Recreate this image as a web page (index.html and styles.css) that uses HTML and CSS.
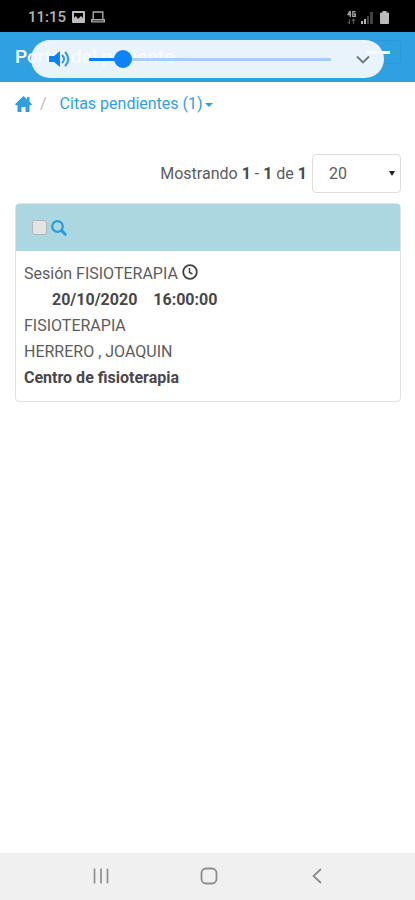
FILE: index.html
```html
<!DOCTYPE html>
<html lang="es">
<head>
<meta charset="utf-8">
<meta name="viewport" content="width=device-width, initial-scale=1">
<title>Portal del paciente</title>
<link rel="stylesheet" href="styles.css">
</head>
<body>
<div class="status">
  <span class="time">11:15</span>
  <svg class="s-pic" width="13" height="12" viewBox="0 0 13 12"><path fill="#bdbdbd" fill-rule="evenodd" d="M1 0h11a1 1 0 0 1 1 1v10a1 1 0 0 1-1 1H1a1 1 0 0 1-1-1V1a1 1 0 0 1 1-1zM2 2v5l2-2 2 3 3-3 2 2V2z"/></svg>
  <svg class="s-lap" width="14" height="12" viewBox="0 0 14 12"><path fill="none" stroke="#a8a8a8" stroke-width="1.400" d="M2.200 8.500V1h9.600v7.500M.700 8.700h12.600v2.200H.700z"/></svg>
  <div class="signals">
    <svg width="9" height="15" viewBox="0 0 9 15"><path fill="none" stroke="#aaa" stroke-width="1.300" d="M3 1 1 4.500h3.200M3.300 1v6M8.500 1.700H5.800v4.600h2.500V4H7"/><path fill="none" stroke="#555" stroke-width="1.200" d="M2.500 9v5M1 12l1.500 2M6.500 14V9M5 11l1.500-2L8 11"/></svg>
    <svg width="12" height="13" viewBox="0 0 12 13"><path fill="#b5b5b5" d="M0 10h2v3H0zM3 8h2v5H3z"/><path fill="#444" d="M6 5h2v8H6zM9 1h3v12H9z"/></svg>
    <svg class="battery" width="9" height="13" viewBox="0 0 9 13"><path fill="#bcbcbc" d="M2.500 0h4v1.500H8a1 1 0 0 1 1 1V12a1 1 0 0 1-1 1H1a1 1 0 0 1-1-1V2.500a1 1 0 0 1 1-1h1.500z"/></svg>
  </div>
</div>
<header class="navbar">
  <a class="brand" href="#">Portal del paciente</a>
  <button class="toggle" type="button" aria-label="Menú"><span class="bar"></span></button>
  <div class="volume">
    <svg class="speaker" width="22" height="18" viewBox="0 0 22 18"><path fill="#0a84f8" d="M0 6h5l6-5v16l-6-5H0z"/><path fill="none" stroke="#3197ee" stroke-width="2" stroke-linecap="round" d="M13.500 5.500q3 3.500 0 7M16.500 2.500q5.500 6.500 0 13"/></svg>
    <input class="slider" type="range" min="0" max="100" value="11" aria-label="Volumen">
    <button class="expand" type="button" aria-label="Más"><svg width="14" height="9" viewBox="0 0 14 9"><path fill="none" stroke="#667883" stroke-width="1.800" d="m1 1.500 6 6 6-6"/></svg></button>
  </div>
</header>
<main>
  <nav class="crumbs">
    <a href="#" aria-label="Inicio"><svg width="17" height="16" viewBox="0 0 17 16"><path fill="#2f9fe0" d="M8.500 0 12 3.300V1h2.500v4.700L17 8.200 16 9.300h-1.500V16h-4v-5h-4v5h-4V9.300H1L0 8.200z"/></svg></a>
    <span class="slash">/</span>
    <a class="current" href="#">Citas pendientes (1)<span class="caret"></span></a>
  </nav>
  <div class="pager">
    <label for="size">Mostrando <b>1</b> - <b>1</b> de <b>1</b></label>
    <div class="select-box"><select id="size"><option>20</option></select></div>
  </div>
  <section class="card">
    <div class="card-head">
      <input class="tick" type="checkbox" aria-label="Seleccionar cita">
      <a href="#" aria-label="Ver cita"><svg width="16" height="16" viewBox="0 0 16 16"><circle cx="6.500" cy="6.500" r="5.300" fill="none" stroke="#259be2" stroke-width="2.200"/><path stroke="#259be2" stroke-width="3" stroke-linecap="round" d="m10.800 10.800 3.400 3.400"/></svg></a>
    </div>
    <div class="card-body">
      <p>Sesión FISIOTERAPIA <svg class="clock" width="16" height="16" viewBox="0 0 16 16"><circle cx="8" cy="8" r="6.800" fill="none" stroke="#404040" stroke-width="1.800"/><path fill="none" stroke="#404040" stroke-width="1.500" d="M7.500 4v4.500l3 1.500"/></svg></p>
      <p class="when"><b>20/10/2020</b><b>16:00:00</b></p>
      <p>FISIOTERAPIA</p>
      <p>HERRERO , JOAQUIN</p>
      <p><b>Centro de fisioterapia</b></p>
    </div>
  </section>
</main>
<footer class="keys">
  <button type="button" aria-label="Recientes"><svg width="18" height="18" viewBox="0 0 18 18"><path stroke="#929292" stroke-width="1.800" d="M2.500 1.500v15M9 1.500v15M15.500 1.500v15"/></svg></button>
  <button type="button" aria-label="Inicio"><svg width="18" height="18" viewBox="0 0 18 18"><rect x="1.500" y="1.500" width="15" height="15" rx="4.500" fill="none" stroke="#8c8c8c" stroke-width="1.800"/></svg></button>
  <button type="button" aria-label="Atrás"><svg width="18" height="18" viewBox="0 0 18 18"><path fill="none" stroke="#8c8c8c" stroke-width="1.800" d="M13 2 5.500 9l7.500 7"/></svg></button>
</footer>
</body>
</html>
```
FILE: styles.css
```css
* { box-sizing: border-box; }
body {
  margin: 0;
  min-height: 100vh;
  display: flex;
  flex-direction: column;
  background: #fff;
  color: #5c5c5c;
  font: 16px/26px Roboto, sans-serif;
}
svg { display: block; }
a { color: #2f9fe0; text-decoration: none; }
button { padding: 0; border: 0; background: none; }
p { margin: 0; }
b { font-weight: 700; color: #484848; }

.status {
  display: flex;
  align-items: center;
  height: 32px;
  padding: 2px 26px 0 28px;
  background: #000;
}
.time { color: #b4b4b4; font-weight: 500; font-size: 15px; }
.s-pic { margin-left: 6px; }
.s-lap { margin-left: 6px; }
.signals { display: flex; align-items: center; gap: 5px; margin-left: auto; }
.battery { margin-left: 2px; }

.navbar {
  position: relative;
  display: flex;
  align-items: center;
  justify-content: space-between;
  height: 50px;
  padding: 0 14px 0 15px;
  background: #2fa0e2;
}
.brand { color: #fff; font-size: 19px; font-weight: 500; }
.toggle {
  align-self: flex-start;
  width: 44px;
  height: 24px;
  margin-top: 8px;
  border: 1px solid #2a99da;
  border-radius: 4px;
}
.bar { display: block; width: 24px; height: 3px; margin: 0 8px; background: #fff; }
.volume {
  position: absolute;
  inset: 8px 31px 4px;
  display: flex;
  align-items: center;
  padding: 0 14px 0 18px;
  border-radius: 19px;
  background: rgba(246, 250, 253, .93);
}
.slider {
  flex: 1;
  min-width: 0;
  height: 18px;
  margin: 0 25px 0 18px;
  appearance: none;
  background: linear-gradient(#0a84f8, #0a84f8) 0 50% / 14% 3px no-repeat,
    linear-gradient(#a3cffa, #a3cffa) 0 50% / 100% 3px no-repeat;
}
.slider::-webkit-slider-thumb {
  appearance: none;
  width: 18px;
  height: 18px;
  border-radius: 50%;
  background: #0a84f8;
}

main { flex: 1; padding: 9px 14px 0 15px; }
.crumbs { display: flex; align-items: center; }
.slash { margin: 0 13px 0 8px; color: #bbb; }
.caret {
  display: inline-block;
  margin-left: 2px;
  border: 4px solid transparent;
  border-top-color: #2f9fe0;
  border-bottom: 0;
  vertical-align: middle;
}
.pager {
  display: flex;
  align-items: center;
  justify-content: flex-end;
  gap: 5px;
  margin: 37px 0 10px;
}
.select-box { position: relative; }
.select-box::after {
  content: "";
  position: absolute;
  top: 17px;
  right: 6px;
  border: 3px solid transparent;
  border-top: 5px solid #222;
  border-bottom: 0;
}
select {
  display: block;
  width: 89px;
  height: 39px;
  padding: 0 16px;
  appearance: none;
  border: 1px solid #ddd;
  border-radius: 4px;
  background: #fff;
  color: #5c5c5c;
  font: inherit;
}

.card { border: 1px solid #e2e2e2; border-radius: 4px; overflow: hidden; }
.card-head {
  display: flex;
  align-items: center;
  gap: 4px;
  height: 47px;
  padding: 0 16px;
  background: #abd7e0;
}
.tick {
  width: 15px;
  height: 15px;
  margin: 0;
  appearance: none;
  border: 1px solid #b5b5b5;
  border-radius: 3px;
  background: #e4e4e4;
}
.card-body { padding: 10px 8px; }
.clock { display: inline-block; vertical-align: -1px; }
.when { display: flex; gap: 16px; padding-left: 28px; }

.keys {
  display: flex;
  justify-content: space-between;
  align-items: center;
  height: 47px;
  padding: 0 89px 2px 92px;
  background: #f0f0f0;
}
```
